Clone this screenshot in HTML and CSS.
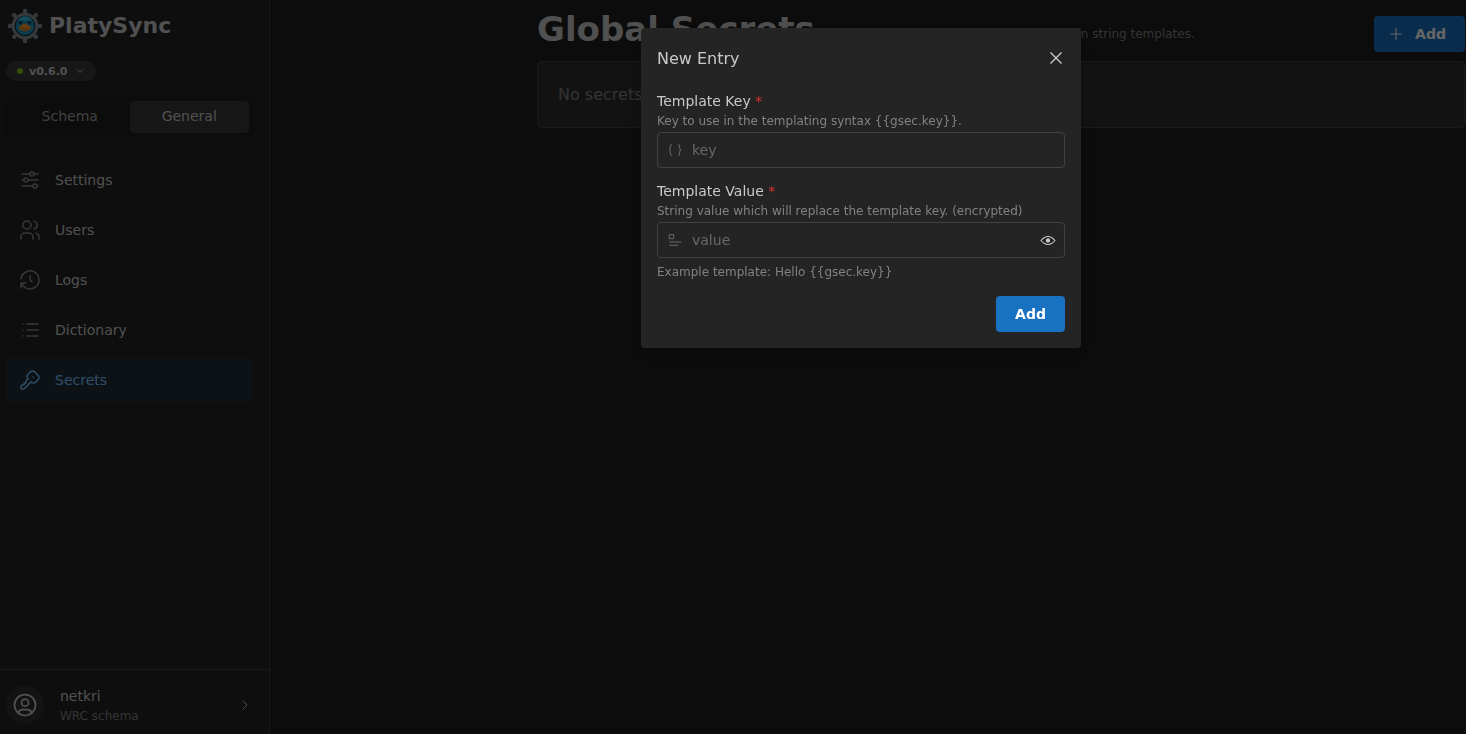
FILE: index.html
```
<!DOCTYPE html>
<html lang="en">
<head>
<meta charset="utf-8">
<meta name="viewport" content="width=device-width, initial-scale=1">
<title>PlatySync</title>
<link rel="stylesheet" href="styles.css">
</head>
<body>
<div class="app">
  <aside class="sidebar">
    <div class="brand">
      <svg class="logo" viewBox="0 0 36 36" aria-hidden="true">
        <g fill="none" stroke="#868e94" stroke-linecap="round">
          <path stroke-width="3" d="M18 2.500V33.500M2.500 18H33.500M7 7L29 29M29 7L7 29"/>
          <path stroke-width="4.400" d="M18 3v.01M18 33v.01M3 18h.01M33 18h.01M7.200 7.200h.01M28.800 28.800h.01M28.800 7.200h.01M7.200 28.800h.01"/>
        </g>
        <circle cx="18" cy="18" r="11.800" fill="#27313a" stroke="#868e94" stroke-width="3"/>
        <circle cx="18" cy="18" r="9.700" fill="#1a93b8" stroke="#12303f" stroke-width="1"/>
        <path d="M10.500 13.500a8 8 0 0 1 15 0q-3.500-2.500-7.500 0-4-2.500-7.500 0z" fill="#38bddb"/>
        <circle cx="13.400" cy="14.800" r="1.700" fill="#173c63"/>
        <circle cx="22.600" cy="14.800" r="1.700" fill="#173c63"/>
        <path d="M18 15.600c2 0 2.800 1.600 5 2.700 1.900 1 1.200 4-1.600 4-1.200 0-2 .9-3.400.9s-2.200-.9-3.400-.9c-2.800 0-3.500-3-1.600-4 2.200-1.100 3-2.700 5-2.700z" fill="#f7942b"/>
        <path d="M12.800 20.600q5.200 1.200 10.400 0" fill="none" stroke="#a3561a" stroke-width=".6"/>
      </svg>
      <span class="brand-name">PlatySync</span>
    </div>
    <button class="version" type="button">
      <span class="dot"></span>v0.6.0
      <svg class="version-arrow" viewBox="0 0 10 10"><path d="M2 3.500l3 3 3-3"/></svg>
    </button>
    <div class="segments">
      <button class="segment" type="button">Schema</button>
      <button class="segment segment-active" type="button">General</button>
    </div>
    <nav class="nav">
      <a class="nav-link" href="#settings"><svg class="icon" viewBox="0 0 24 24"><circle cx="14" cy="6" r="2"/><path d="M4 6h8M16 6h4"/><circle cx="8" cy="12" r="2"/><path d="M4 12h2M10 12h10"/><circle cx="17" cy="18" r="2"/><path d="M4 18h11M19 18h1"/></svg>Settings</a>
      <a class="nav-link" href="#users"><svg class="icon" viewBox="0 0 24 24"><circle cx="9" cy="7" r="4"/><path d="M3 21v-2a4 4 0 0 1 4-4h4a4 4 0 0 1 4 4v2M16 3.130a4 4 0 0 1 0 7.750M21 21v-2a4 4 0 0 0-3-3.850"/></svg>Users</a>
      <a class="nav-link" href="#logs"><svg class="icon" viewBox="0 0 24 24"><path d="M12 8v4l2 2M3.050 11a9 9 0 1 1 .5 4m-.5 5v-5h5"/></svg>Logs</a>
      <a class="nav-link" href="#dictionary"><svg class="icon" viewBox="0 0 24 24"><path d="M9 6h11M9 12h11M9 18h11M5 6v.01M5 12v.01M5 18v.01"/></svg>Dictionary</a>
      <a class="nav-link nav-active" href="#secrets" aria-current="page"><svg class="icon" viewBox="0 0 24 24"><path d="M16.555 3.843l3.602 3.602a2.877 2.877 0 0 1 0 4.069l-2.643 2.643a2.877 2.877 0 0 1-4.069 0l-.301-.301-6.558 6.558a2 2 0 0 1-1.239.578L5.172 21H4a1 1 0 0 1-.993-.883L3 20v-1.172a2 2 0 0 1 .467-1.284l.119-.13L4 17h2v-2h2v-2l2.144-2.144-.301-.301a2.877 2.877 0 0 1 0-4.069l2.643-2.643a2.877 2.877 0 0 1 4.069 0zM15 9h.01"/></svg>Secrets</a>
    </nav>
    <button class="user" type="button">
      <span class="avatar"><svg class="icon avatar-icon" viewBox="0 0 24 24"><circle cx="12" cy="12" r="9"/><circle cx="12" cy="10" r="3"/><path d="M6.168 18.849A4 4 0 0 1 10 16h4a4 4 0 0 1 3.834 2.855"/></svg></span>
      <span class="user-text"><span class="user-name">netkri</span><span class="user-schema">WRC schema</span></span>
      <svg class="icon user-arrow" viewBox="0 0 24 24"><path d="M9 6l6 6-6 6"/></svg>
    </button>
  </aside>
  <main class="main">
    <header class="page-header">
      <h1 class="page-title">Global Secrets</h1>
      <p class="page-note">Secrets that can be used globally within string templates.</p>
      <button class="button page-add" type="button"><svg class="icon plus" viewBox="0 0 24 24"><path d="M12 5v14M5 12h14"/></svg>Add</button>
    </header>
    <section class="card">No secrets</section>
  </main>
</div>
<div class="overlay">
  <form class="modal" role="dialog" aria-modal="true" aria-labelledby="modal-title">
    <header class="modal-header">
      <h2 class="modal-title" id="modal-title">New Entry</h2>
      <button class="close" type="button" aria-label="Close"><svg class="close-icon" viewBox="0 0 12 12"><path d="M0.500 0.500l11 11M11.500 0.500l-11 11"/></svg></button>
    </header>
    <div class="field">
      <label class="label" for="key">Template Key <span class="required">*</span></label>
      <p class="hint">Key to use in the templating syntax {{gsec.key}}.</p>
      <div class="input-box">
        <svg class="icon input-icon" viewBox="0 0 24 24"><path d="M7 4a2 2 0 0 0-2 2v3a2 3 0 0 1-2 3 2 3 0 0 1 2 3v3a2 2 0 0 0 2 2M17 4a2 2 0 0 1 2 2v3a2 3 0 0 0 2 3 2 3 0 0 0-2 3v3a2 2 0 0 1-2 2"/></svg>
        <input class="input" id="key" type="text" placeholder="key">
      </div>
    </div>
    <div class="field">
      <label class="label" for="value">Template Value <span class="required">*</span></label>
      <p class="hint">String value which will replace the template key. (encrypted)</p>
      <div class="input-box">
        <svg class="icon input-icon" viewBox="0 0 24 24"><path d="M4 4h6v6H4zM4 15h17M4 20h12"/></svg>
        <input class="input" id="value" type="password" placeholder="value">
        <button class="eye" type="button" aria-label="Show value"><svg class="eye-icon" viewBox="0 0 16 16"><path d="M1 8.500Q8 .5 15 8.500 8 16.500 1 8.500z"/><circle cx="8" cy="8.500" r="1.600"/></svg></button>
      </div>
    </div>
    <p class="example">Example template: Hello {{gsec.key}}</p>
    <button class="button modal-add" type="submit">Add</button>
  </form>
</div>
</body>
</html>
```
FILE: styles.css
```
* { box-sizing: border-box; }
body {
  margin: 0;
  background: #1f1f1f;
  color: #c9c9c9;
  font-family: "DejaVu Sans", sans-serif;
  font-size: 14px;
}
h1, h2, p { margin: 0; }
button, input { font: inherit; color: inherit; }
button { border: 0; padding: 0; background: none; }
svg { flex: none; }
.icon {
  width: 24px;
  height: 24px;
  fill: none;
  stroke: currentColor;
  stroke-width: 1.5;
  stroke-linecap: round;
  stroke-linejoin: round;
}
.app { display: flex; min-height: 100vh; }
.sidebar {
  display: flex;
  flex-direction: column;
  flex: 0 0 270px;
  background: #242424;
  border-right: 1px solid #424242;
}
.brand { display: flex; align-items: center; gap: 6px; padding: 7px 7px 0; }
.logo { width: 36px; height: 36px; }
.brand-name { font-size: 22px; font-weight: 700; line-height: 38px; }
.version {
  display: flex;
  align-items: center;
  align-self: flex-start;
  height: 20px;
  margin: 16px 6px;
  padding: 0 11px;
  border-radius: 10px;
  background: #3b3b3b;
  font-size: 11px;
  font-weight: 700;
}
.dot { width: 6px; height: 6px; margin-right: 6px; border-radius: 50%; background: #82c91e; }
.version-arrow { width: 10px; height: 10px; margin-left: 7px; fill: none; stroke: currentColor; }
.segments {
  display: flex;
  margin: 0 16px 0 6px;
  padding: 4px;
  border-radius: 4px;
  background: #1f1f1f;
}
.segment { flex: 1; height: 32px; padding-bottom: 2px; border-radius: 4px; color: #a0a0a0; }
.segment-active { background: #3b3b3b; color: #c9c9c9; }
.nav { display: flex; flex-direction: column; flex: 1; gap: 6px; margin: 21px 16px 0 6px; }
.nav-link {
  display: flex;
  align-items: center;
  gap: 13px;
  height: 44px;
  padding: 0 12px;
  border-radius: 4px;
  color: #c9c9c9;
  text-decoration: none;
}
.nav-link .icon { stroke: #8c8c8c; }
.nav-active { background: rgba(25, 113, 194, 0.15); color: #74c0fc; }
.nav-link.nav-active .icon { stroke: #74c0fc; }
.user {
  display: flex;
  align-items: center;
  gap: 16px;
  padding: 15px 16px 9px 6px;
  border-top: 1px solid #424242;
  text-align: left;
}
.avatar { display: grid; place-items: center; width: 38px; height: 38px; border-radius: 50%; background: #313131; }
.avatar-icon { width: 28px; height: 28px; }
.user-text { display: flex; flex: 1; flex-direction: column; }
.user-name { line-height: 22px; }
.user-schema { color: #828282; font-size: 12px; line-height: 18px; }
.user-arrow { width: 16px; height: 16px; }
.main { flex: 1; min-width: 0; padding: 7px 1px 0 267px; }
.page-header { display: flex; align-items: center; }
.page-title { margin-bottom: 10px; font-size: 34px; line-height: 44px; white-space: nowrap; }
.page-note { flex: 1; margin-left: 33px; color: #828282; font-size: 12px; line-height: 18px; white-space: nowrap; }
.button {
  display: flex;
  align-items: center;
  justify-content: center;
  height: 36px;
  padding: 0 19px;
  border-radius: 4px;
  background: #1971c2;
  color: #fff;
  font-weight: 700;
}
.page-add { gap: 10px; padding-left: 13px; }
.plus { width: 18px; height: 18px; }
.card {
  padding: 20px;
  border: 1px solid #424242;
  border-radius: 4px;
  background: #2e2e2e;
  color: #828282;
  font-size: 16px;
  line-height: 25px;
}
.overlay {
  position: fixed;
  inset: 0;
  display: flex;
  align-items: flex-start;
  justify-content: center;
  padding: 28px 0 0 256px;
  background: rgba(0, 0, 0, 0.6);
}
.modal {
  display: flex;
  flex-direction: column;
  width: 440px;
  padding: 0 16px 16px;
  border-radius: 4px;
  background: #242424;
  box-shadow: 0 8px 24px rgba(0, 0, 0, 0.2);
}
.modal-header { display: flex; align-items: center; justify-content: space-between; height: 60px; margin-bottom: 2px; }
.modal-title { font-size: 16px; font-weight: 400; }
.close { display: grid; place-items: center; width: 18px; height: 28px; }
.close-icon { width: 12px; height: 12px; fill: none; stroke: currentColor; stroke-width: 1.4; }
.field { margin-bottom: 12px; }
.label { display: block; line-height: 22px; }
.required { color: #e03131; }
.hint { margin-bottom: 2px; color: #828282; font-size: 12px; line-height: 18px; }
.input-box {
  display: flex;
  align-items: center;
  height: 36px;
  padding: 0 8px 0 9px;
  border: 1px solid #424242;
  border-radius: 4px;
}
.input-icon { width: 16px; height: 16px; color: #696969; }
.input { flex: 1; min-width: 0; height: 34px; padding: 0 0 0 9px; border: 0; outline: 0; background: none; }
.input::placeholder { color: #696969; opacity: 1; }
.eye { display: grid; place-items: center; width: 16px; height: 28px; }
.eye-icon { width: 16px; height: 16px; fill: none; stroke: currentColor; stroke-width: 1.1; }
.eye-icon circle { fill: currentColor; }
.example { margin: -8px 0 14px; color: #828282; font-size: 12px; line-height: 20px; }
.modal-add { align-self: flex-end; }
```
